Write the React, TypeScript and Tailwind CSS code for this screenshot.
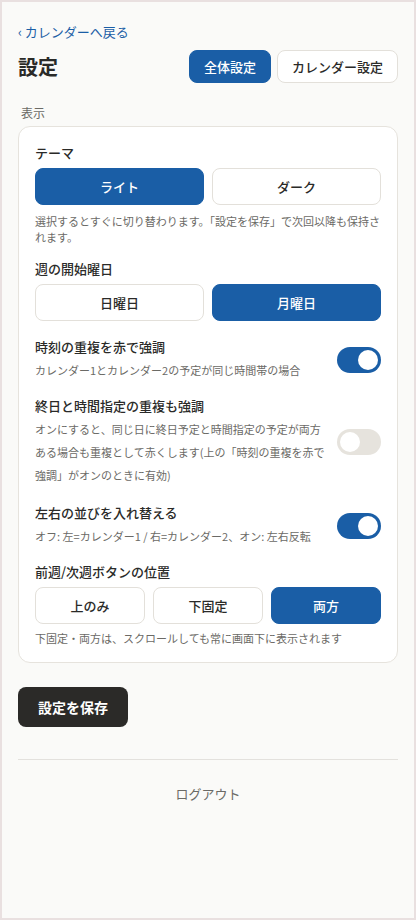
import React, { useState } from "react";

const font = { fontFamily: '"Noto Sans CJK JP", "Noto Sans", sans-serif' };

function Toggle({ on, onClick }: { on: boolean; onClick: () => void }) {
  return (
    <button
      onClick={onClick}
      className={`relative shrink-0 w-[44px] h-[26px] rounded-full ${on ? "bg-[#1a5ea6]" : "bg-[#e6e3dd]"}`}
    >
      <span
        className={`absolute top-[3px] w-[20px] h-[20px] rounded-full bg-white ${on ? "left-[21px]" : "left-[3px]"}`}
      />
    </button>
  );
}

function Opt({ label, active, onClick }: { label: string; active: boolean; onClick: () => void }) {
  return (
    <button
      onClick={onClick}
      className={`flex-1 h-[37px] rounded-[8px] text-[13px] font-medium ${
        active ? "bg-[#1a5ea6] text-white border border-[#1a5ea6]" : "bg-white text-[#2a2a28] border border-[#e3e0da]"
      }`}
    >
      {label}
    </button>
  );
}

export default function App() {
  const [theme, setTheme] = useState("light");
  const [week, setWeek] = useState("mon");
  const [t1, setT1] = useState(true);
  const [t2, setT2] = useState(false);
  const [t3, setT3] = useState(true);
  const [pos, setPos] = useState("both");
  const [tab, setTab] = useState("all");

  return (
    <div style={font} className="min-h-[920px] border-2 border-[#e9e0e0] bg-[#fafaf8] text-[#2a2a28]">
      <div className="px-4 pt-5">
        <div className="text-[13px] leading-[20px] text-[#1a5ea6]">‹ カレンダーへ戻る</div>
        <div className="mt-2 flex items-center justify-between">
          <h1 className="text-[20px] font-bold leading-[28px]">設定</h1>
          <div className="flex gap-[6px]">
            <button
              onClick={() => setTab("all")}
              className={`h-[33px] px-[14px] rounded-[8px] text-[13px] font-medium border ${
                tab === "all" ? "bg-[#1a5ea6] border-[#1a5ea6] text-white" : "bg-white border-[#e3e0da]"
              }`}
            >
              全体設定
            </button>
            <button
              onClick={() => setTab("cal")}
              className={`h-[33px] px-[14px] rounded-[8px] text-[13px] font-medium border ${
                tab === "cal" ? "bg-[#1a5ea6] border-[#1a5ea6] text-white" : "bg-white border-[#e3e0da]"
              }`}
            >
              カレンダー設定
            </button>
          </div>
        </div>

        <div className="mt-[22px] mb-[5px] pl-[3px] text-[12px] leading-[16px] text-[#6b6a66]">表示</div>

        <div className="rounded-[12px] border border-[#e6e3dd] bg-white p-4">
          <div className="text-[13px] font-medium leading-[20px]">テーマ</div>
          <div className="mt-[5px] flex gap-2">
            <Opt label="ライト" active={theme === "light"} onClick={() => setTheme("light")} />
            <Opt label="ダーク" active={theme === "dark"} onClick={() => setTheme("dark")} />
          </div>
          <p className="mt-2 text-[11px] leading-[16px] text-[#6b6a66]">
            選択するとすぐに切り替わります。「設定を保存」で次回以降も保持されます。
          </p>

          <div className="mt-[14px] text-[13px] font-medium leading-[20px]">週の開始曜日</div>
          <div className="mt-[5px] flex gap-2">
            <Opt label="日曜日" active={week === "sun"} onClick={() => setWeek("sun")} />
            <Opt label="月曜日" active={week === "mon"} onClick={() => setWeek("mon")} />
          </div>

          <div className="mt-4 flex items-center gap-3">
            <div className="flex-1">
              <div className="text-[13px] font-medium leading-[20px]">時刻の重複を赤で強調</div>
              <div className="mt-[2px] text-[11px] leading-[23px] text-[#6b6a66]">
                カレンダー1とカレンダー2の予定が同じ時間帯の場合
              </div>
            </div>
            <Toggle on={t1} onClick={() => setT1(!t1)} />
          </div>

          <div className="mt-[14px] flex items-center gap-3">
            <div className="flex-1">
              <div className="text-[13px] font-medium leading-[20px]">終日と時間指定の重複も強調</div>
              <div className="mt-[2px] text-[11px] leading-[23px] text-[#6b6a66]">
                オンにすると、同じ日に終日予定と時間指定の予定が両方ある場合も重複として赤くします(上の「時刻の重複を赤で強調」がオンのときに有効)
              </div>
            </div>
            <Toggle on={t2} onClick={() => setT2(!t2)} />
          </div>

          <div className="mt-4 flex items-center gap-3">
            <div className="flex-1">
              <div className="text-[13px] font-medium leading-[20px]">左右の並びを入れ替える</div>
              <div className="mt-[2px] text-[11px] leading-[23px] text-[#6b6a66]">
                オフ: 左=カレンダー1 / 右=カレンダー2、オン: 左右反転
              </div>
            </div>
            <Toggle on={t3} onClick={() => setT3(!t3)} />
          </div>

          <div className="mt-[14px] text-[13px] font-medium leading-[20px]">前週/次週ボタンの位置</div>
          <div className="mt-[5px] flex gap-2">
            <Opt label="上のみ" active={pos === "top"} onClick={() => setPos("top")} />
            <Opt label="下固定" active={pos === "bottom"} onClick={() => setPos("bottom")} />
            <Opt label="両方" active={pos === "both"} onClick={() => setPos("both")} />
          </div>
          <p className="mt-[6px] text-[11px] leading-[16px] text-[#6b6a66]">
            下固定・両方は、スクロールしても常に画面下に表示されます
          </p>
        </div>

        <button className="mt-6 h-[40px] px-5 rounded-[8px] bg-[#2b2a28] text-white text-[14px] font-bold">
          設定を保存
        </button>

        <div className="mt-8 border-t border-[#e3e1dd] pt-6 text-center text-[13px] leading-[20px] text-[#6b6a66]">
          ログアウト
        </div>
      </div>
    </div>
  );
}
